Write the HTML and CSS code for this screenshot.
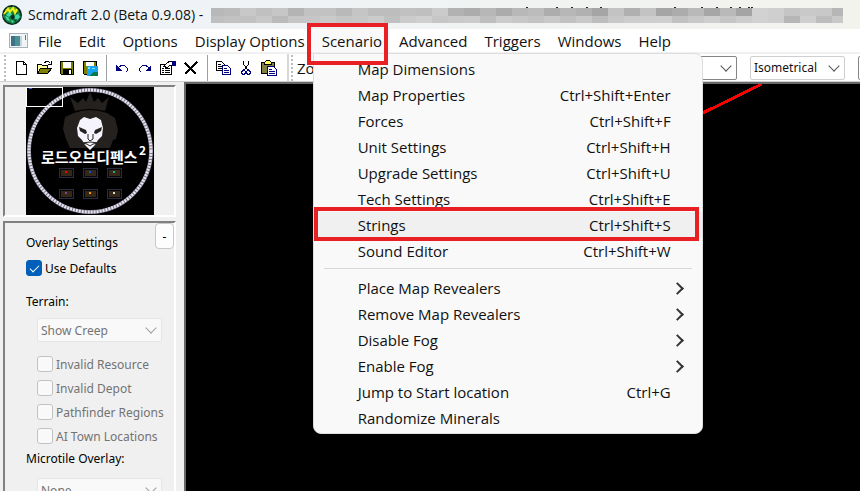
FILE: index.html
```
<!DOCTYPE html>
<html lang="en">
<head>
    <meta charset="UTF-8">
    <meta name="viewport" content="width=device-width, initial-scale=1.0">
    <title>Scmdraft 2.0 (Beta 0.9.08)</title>
    <link rel="stylesheet" href="styles.css">
</head>
<body>

<header class="titlebar">
    <svg class="app-icon" width="20" height="20" viewBox="0 0 20 20">
        <circle cx="10" cy="10" r="10" fill="#06251c"/>
        <path d="M1 9l5-6 4 4 3-5 5 6 1 4-3 4-5 3-6-2-4-5z" fill="#17843c"/>
        <path d="M3 11l3 1 2 4-3-1zM12 11l4-2 2 3-4 4zM7 7l3 2-3 3-3-2zM9 15l3 1-2 2z" fill="#3fd9b0"/>
        <path d="M8 12l3-3 2 3-2 3zM13 5l3 2-2 2zM2 7l2 1-1 3zM12 15l3-1-1 3z" fill="#08302a"/>
        <path d="M3 5l3-3h7l4 4-3 2-4-2-4 2z" fill="#5fae2c"/>
        <path d="M2 9l4-5 2 3 3-4 2 5 2-4" fill="none" stroke="#f0ef18" stroke-width="2"/>
    </svg>
    <span class="title">Scmdraft 2.0 (Beta 0.9.08) -</span>
    <svg class="mosaic" id="mosaic" width="632" height="16" viewBox="0 0 632 16" shape-rendering="crispEdges"></svg>
</header>

<nav class="menubar">
    <svg class="doc-icon" width="19" height="15" viewBox="0 0 19 15" shape-rendering="crispEdges">
        <rect width="19" height="15" fill="#a9b2bc"/>
        <rect x="1" y="1" width="17" height="13" fill="#f1f5f7"/>
        <rect x="2" y="3" width="9" height="10" fill="#4c8f94"/>
        <rect x="2" y="3" width="4" height="10" fill="#3b7284"/>
        <rect x="11" y="3" width="2" height="10" fill="#c5d6dc"/>
        <rect x="16" y="2" width="1" height="5" fill="#4a7c96"/>
    </svg>
    <button>File</button>
    <button>Edit</button>
    <button>Options</button>
    <button>Display Options</button>
    <div class="menu-holder">
        <button class="open">Scenario</button>
        <div class="menu">
            <button class="item">Map Dimensions</button>
            <button class="item">Map Properties<span>Ctrl+Shift+Enter</span></button>
            <button class="item">Forces<span>Ctrl+Shift+F</span></button>
            <button class="item">Unit Settings<span>Ctrl+Shift+H</span></button>
            <button class="item">Upgrade Settings<span>Ctrl+Shift+U</span></button>
            <button class="item">Tech Settings<span>Ctrl+Shift+E</span></button>
            <button class="item active">Strings<span>Ctrl+Shift+S</span></button>
            <button class="item">Sound Editor<span>Ctrl+Shift+W</span></button>
            <hr>
            <button class="item sub">Place Map Revealers</button>
            <button class="item sub">Remove Map Revealers</button>
            <button class="item sub">Disable Fog</button>
            <button class="item sub">Enable Fog</button>
            <button class="item">Jump to Start location<span>Ctrl+G</span></button>
            <button class="item">Randomize Minerals</button>
        </div>
    </div>
    <button>Advanced</button>
    <button>Triggers</button>
    <button>Windows</button>
    <button>Help</button>
</nav>

<div class="toolbar">
    <i class="grip"></i>
    <button class="tool" aria-label="New"><svg viewBox="0 0 16 16"><path d="M3.5 1.5h7l3 3v10h-10zM10.5 1.5v3h3" fill="#fff" stroke="#000"/></svg></button>
    <button class="tool" aria-label="Open"><svg viewBox="0 0 16 16"><path d="M1.5 13.5v-9h4l1 1h5v3" fill="#ffff9c" stroke="#000"/><path d="M1.5 13.5l3-5h11l-4 5z" fill="#808000" stroke="#000"/><path d="M8.5 2.5l2-1h2l2 2M15 1v3h-3" fill="none" stroke="#000"/></svg></button>
    <button class="tool" aria-label="Save"><svg viewBox="0 0 16 16"><path d="M1.5 1.5h13v13h-12l-1-1z" fill="#808000" stroke="#000"/><path d="M4 2h8v6H4z" fill="#fff"/><path d="M4 9h9v6H4z" fill="#000"/><path d="M10 10h2v4h-2z" fill="#fff"/></svg></button>
    <button class="tool" aria-label="Save map image"><svg viewBox="0 0 16 16"><path d="M1.5 1.5h13v13h-12l-1-1z" fill="#808000" stroke="#000"/><path d="M4 2h8v4H4z" fill="#fff"/><path d="M5 6h11v10H5z" fill="#18a4ec"/><path d="M6 7h2v2H6zM10 8h3v1h-3z" fill="#6fe3ff"/><path d="M7 16l5-4h4v4z" fill="#087a4a"/></svg></button>
    <i class="sep"></i>
    <button class="tool" aria-label="Undo"><svg viewBox="0 0 16 16"><path d="M3.5 8.5l2-2 2-1h3l3 3v2l-2 2" fill="none" stroke="#000080"/><path d="M2 5v6h6z" fill="#000080"/></svg></button>
    <button class="tool" aria-label="Redo"><svg viewBox="0 0 16 16"><path d="M12.5 8.5l-2-2-2-1h-3l-3 3v2l2 2" fill="none" stroke="#000080"/><path d="M14 5v6H8z" fill="#000080"/></svg></button>
    <button class="tool" aria-label="Properties"><svg viewBox="0 0 16 16"><path d="M.5 4.5h11v10H.5z" fill="#fff" stroke="#000"/><path d="M2 8.5h2M5 8.5h5M2 10.5h2M5 10.5h5M2 12.5h2M5 12.5h5" stroke="#000"/><path d="M3.5 6.5l4-4 2-1h3v4h-3l-2 2z" fill="#fff" stroke="#000"/><path d="M12 1h4v5h-4z" fill="#000080"/></svg></button>
    <button class="tool" aria-label="Delete"><svg viewBox="0 0 16 16"><path d="M2 3l11 11M14 2L2 14" stroke="#000" stroke-width="2"/></svg></button>
    <i class="sep"></i>
    <button class="tool" aria-label="Copy"><svg viewBox="0 0 16 16"><path d="M1.5 1.5h5l3 3v6h-8z" fill="#fff" stroke="#000"/><path d="M3 4.5h3M3 6.5h5M3 8.5h5" stroke="#000"/><path d="M7.5 5.5h5l3 3v6h-8z" fill="#fff" stroke="#000080"/><path d="M9 8.5h3M9 10.5h5M9 12.5h5" stroke="#000080"/></svg></button>
    <button class="tool" aria-label="Cut"><svg viewBox="0 0 16 16"><path d="M5.5 1v3l4 6M10.5 1v3l-4 6" fill="none" stroke="#000"/><path d="M6.5 9.5l-2 1-1 2 1 2h2l1-2zM9.5 9.5l2 1 1 2-1 2h-2l-1-2z" fill="none" stroke="#000080"/></svg></button>
    <button class="tool" aria-label="Paste"><svg viewBox="0 0 16 16"><path d="M.5 2.5h13v11H.5z" fill="#808040" stroke="#000"/><path d="M3.5 3.5v-1l2-2h3l2 2v2h-7z" fill="#ffff60" stroke="#000"/><path d="M6.5 6.5h6l3 3v6h-9z" fill="#fff" stroke="#000080"/><path d="M8 9.5h3M8 11.5h6M8 13.5h6" stroke="#000080"/></svg></button>
    <i class="edge"></i>
    <i class="grip"></i>
    <label class="zoom-label" for="zoom">Zoom:</label>
    <span class="combo strong"><select id="zoom"><option></option></select></span>
    <span class="combo view"><select aria-label="View"><option>Isometrical</option></select></span>
    <span class="combo strong"><select aria-label="Layer"><option></option></select></span>
</div>

<main>
    <aside>
        <section class="panel map-panel">
            <svg class="minimap" width="128" height="128" viewBox="0 0 128 128">
                <rect width="128" height="128"/>
                <circle cx="64" cy="64" r="61" fill="none" stroke="#777487" stroke-width="4"/>
                <circle cx="64" cy="64" r="61" fill="none" stroke="#e8e3ee" stroke-width="3" stroke-dasharray="2 1"/>
                <path d="M49 24l-5-14 8 6 5-5 3 4 4-10 4 10 4-4 4 5 7-6-4 14q-15-4-30 0z" fill="#24211e"/>
                <path d="M48 26q16-6 33 0l8 5 3 12-2 9-3 1-3 8H44l-4-9-3-10 2-12z" fill="#24211e"/>
                <path d="M54 33l4-3 6 2 6-2 5 3 2 8-1 8-4 4-3 5-5 5-5-5-3-5-4-4-1-8z" fill="#f5f3fb"/>
                <path d="M53 40l7 3 1 3-2 1-5-3zM76 40l-7 3-1 3 2 1 5-3z" fill="#24211e"/>
                <path d="M62 47v5l2 2 3-2v-5M56 56l8-1 9 1-6 1-3 2-3-2z" fill="none" stroke="#24211e"/>
                <text class="map-name" x="15" y="76">로드오브디펜스</text>
                <text class="map-power" x="113" y="68">2</text>
                <g id="beacons" shape-rendering="crispEdges"></g>
                <rect x=".5" y=".5" width="36" height="19" fill="none" stroke="#fff"/>
                <path d="M3 1h3v1H3z" fill="#405ee0"/>
            </svg>
        </section>
        <section class="panel settings">
            <button class="collapse">-</button>
            <h2>Overlay Settings</h2>
            <label class="check"><input type="checkbox" checked>Use Defaults</label>
            <h2 class="terrain">Terrain:</h2>
            <span class="combo disabled"><select aria-label="Terrain" disabled><option>Show Creep</option></select></span>
            <div class="checks">
                <label class="check"><input type="checkbox" disabled>Invalid Resource</label>
                <label class="check"><input type="checkbox" disabled>Invalid Depot</label>
                <label class="check"><input type="checkbox" disabled>Pathfinder Regions</label>
                <label class="check"><input type="checkbox" disabled>AI Town Locations</label>
            </div>
            <h2 class="microtile">Microtile Overlay:</h2>
            <span class="combo disabled"><select aria-label="Microtile Overlay" disabled><option>None</option></select></span>
        </section>
    </aside>
    <div class="canvas">
        <svg width="100%" height="100" shape-rendering="crispEdges">
            <path d="M400 86L576 0" stroke="#f00" stroke-width="3"/>
        </svg>
    </div>
</main>

<script src="app.js"></script>
</body>
</html>
```

FILE: styles.css
```
* {
    box-sizing: border-box;
}
body {
    margin: 0;
    height: 100vh;
    display: flex;
    flex-direction: column;
    overflow: hidden;
    background-color: #f0f0f0;
    color: #111;
    font-family: "Open Sans", sans-serif;
    font-size: 15px;
}
button, select, input {
    margin: 0;
    padding: 0;
    border: 0;
    background: none;
    color: inherit;
    font: inherit;
}

/* title and menu bar */
.titlebar {
    flex: none;
    display: flex;
    align-items: center;
    height: 29px;
    padding-left: 2px;
    background: linear-gradient(90deg, #eef3f9, #f3f3ee);
}
.title {
    width: 183px;
    margin-left: 6px;
    font-size: 14px;
    white-space: nowrap;
}
.mosaic {
    margin-top: 2px;
    overflow: visible;
}
.menubar {
    flex: none;
    display: flex;
    align-items: center;
    height: 25px;
    padding-left: 9px;
    background-color: #fff;
    border-bottom: 2px solid #f0f0f0;
}
.doc-icon {
    margin-right: 1px;
}
.menubar > button, .open {
    height: 23px;
    padding: 0 8px 0 9px;
    white-space: nowrap;
}
.menu-holder {
    position: relative;
    background-color: #f9f9f9;
}
.menu-holder::before {
    content: "";
    position: absolute;
    z-index: 3;
    top: -6px;
    left: -6px;
    right: 2px;
    height: 34px;
    border: 4px solid #e81f23;
}
.menu {
    position: absolute;
    z-index: 2;
    top: 24px;
    left: 0;
    width: 390px;
    padding: 2px 0;
    background-color: #f9f9f9;
    border: 1px solid #dedede;
    border-radius: 0 8px 8px 8px;
}
.item {
    position: relative;
    display: flex;
    justify-content: space-between;
    align-items: center;
    width: 100%;
    height: 26px;
    padding: 0 31px 0 44px;
}
.item.active {
    background-color: #f0f0f0;
}
.item.active::before {
    content: "";
    position: absolute;
    top: -5px;
    bottom: -3px;
    left: 0;
    right: 3px;
    border: 4px solid #e81f23;
}
.item.sub::after, .combo::after {
    content: "";
    width: 7px;
    height: 7px;
    border: solid #333;
    border-width: 2px 2px 0 0;
    transform: rotate(45deg);
}
.item.sub {
    padding-right: 20px;
}
.menu hr {
    margin: 4px 10px 6px;
    border: 0;
    border-top: 1px solid #d7d7d7;
}

/* toolbar */
.toolbar {
    flex: none;
    display: flex;
    align-items: center;
    height: 28px;
    padding-left: 4px;
    overflow: hidden;
    background-color: #fff;
    border-bottom: 1px solid #d0d0d0;
}
.toolbar > * {
    flex: none;
}
.grip {
    width: 2px;
    height: 26px;
    margin-right: 4px;
    background: repeating-linear-gradient(#bcbcbc 0 2px, #fff 2px 4px);
}
.tool {
    width: 23px;
    height: 22px;
    padding: 3px 4px 3px 3px;
}
.tool svg {
    display: block;
    width: 16px;
    height: 16px;
    shape-rendering: crispEdges;
}
.sep {
    width: 1px;
    height: 26px;
    margin: 0 4px;
    background-color: #a0a0a0;
}
.edge {
    width: 2px;
    height: 28px;
    margin: 0 2px 0 6px;
    background-color: #d8d8d8;
}
.zoom-label {
    width: 320px;
}
.combo {
    position: relative;
    display: block;
    width: 120px;
    height: 24px;
    margin-right: 13px;
    background-color: #fff;
    border: 1px solid #cfcfcf;
    border-radius: 2px;
    font-family: "Noto Sans", sans-serif;
    font-size: 12px;
}
.combo select {
    display: block;
    width: 100%;
    height: 100%;
    padding-left: 3px;
    appearance: none;
    opacity: 1;
}
.combo::after {
    position: absolute;
    top: 5px;
    right: 6px;
    border-color: #555;
    border-width: 1px 1px 0 0;
    transform: rotate(135deg);
    pointer-events: none;
}
.combo.strong {
    border-color: #858585;
}
.combo.view {
    width: 95px;
}
.combo.disabled {
    width: 125px;
    margin: 0 0 0 11px;
    background-color: #f9f9f9;
    border-color: #e6e6e6;
    color: #737373;
}
.combo.disabled::after {
    border-color: #a0a0a0;
}

/* side panels */
main {
    flex: 1;
    min-height: 0;
    display: flex;
}
aside {
    flex: none;
    display: flex;
    flex-direction: column;
    width: 184px;
    padding: 3px 8px 0 3px;
}
.panel {
    border: 2px solid;
    border-color: #808080 #fff #fff #808080;
}
.map-panel {
    flex: none;
    margin-bottom: 4px;
}
.minimap {
    display: block;
    margin: 0 auto;
}
.map-name, .map-power {
    fill: #fff;
    font-family: "Noto Sans CJK KR", sans-serif;
    font-size: 15px;
    font-weight: bold;
}
.map-power {
    font-size: 12px;
}
.settings {
    position: relative;
    flex: 1;
    min-height: 0;
    overflow: hidden;
    padding: 11px 0 0 21px;
    border-bottom: 0;
    font-family: "Noto Sans", sans-serif;
    font-size: 12px;
    color: #000;
}
.settings h2 {
    margin: 0;
    font-size: 12px;
    font-weight: normal;
    line-height: 18px;
}
.collapse {
    position: absolute;
    top: 0;
    right: 0;
    width: 19px;
    height: 26px;
    background-color: #fdfdfd;
    border: 1px solid #c8c8c8;
    border-radius: 4px;
}
.check {
    display: flex;
    align-items: center;
    height: 24px;
    white-space: nowrap;
}
h2 + .check {
    margin-top: 4px;
}
.check input {
    flex: none;
    width: 16px;
    height: 16px;
    margin-right: 3px;
    appearance: none;
    background-color: #f9f9f9;
    border: 1px solid #c3c3c3;
    border-radius: 3px;
}
.check input:checked {
    background-color: #005fb8;
    border-color: #005fb8;
}
.check input:checked::before {
    content: "";
    display: block;
    width: 8px;
    height: 4px;
    margin: 4px 3px;
    border: solid #fff;
    border-width: 0 0 1px 1px;
    transform: rotate(-45deg);
}
.settings .terrain {
    margin: 13px 0 7px;
}
.checks {
    padding: 10px 0 2px 11px;
    color: #737373;
}
.settings .microtile {
    margin-bottom: 10px;
}
.canvas {
    position: relative;
    flex: 1;
    overflow: hidden;
    background-color: #000;
    border: 2px solid #696969;
    border-width: 2px 0 0 2px;
}
.canvas svg {
    position: absolute;
    top: 0;
    left: 0;
}
```

FILE: app.js
```
// grey cells that cover the file path, two rows
const rows = [
    'b8 bb c8 c0 c6 b4 c2 c2 b9 c5 bd bd c1 bf cb b2 ac b7 ab b8 bc ad b7 b1 a5 c3 b0 c3 a5 ac b9 a6 b9 a4 d2 cf c5 c9 c8 b6',
    'bf c2 c1 c8 ba c5 c6 ca c5 c7 cb c0 cb d0 c6 ca cb be cb c7 c3 c9 c1 c9 bd c8 cc ce cf c1 c8 ce c5 cc d1 cf b6 cf bd c9'
];
const svg = (x, y, w, h, fill, stroke) =>
    `<rect x="${x}" y="${y}" width="${w}" height="${h}" fill="${fill}" stroke="${stroke || 'none'}"/>`;

let cells = '';
rows.forEach((row, r) => row.split(' ').forEach((c, i) => {
    const x = Math.max(0, i * 16 - 3);
    cells += svg(x, r * 8, Math.min(16, 632 - x), r ? 7 : 8, '#' + c + c + c);
}));
// tips of the letters left above the cells
[315, 345, 360, 375, 389, 463, 490, 505, 519, 528, 537, 540].forEach(x => {
    cells += svg(x, -1, 2, 1, '#222');
});
document.getElementById('mosaic').innerHTML = cells;

const colors = ['#f00000', '#1050d0', '#20a888', '#8040a0', '#ff9010', '#c8e0d0'];
document.getElementById('beacons').innerHTML = colors.map((c, i) => {
    const x = 33 + i % 3 * 24;
    const y = i < 3 ? 81 : 102;
    return svg(x + .5, y + .5, 14, 9, '#08080c', '#2a2c40') + svg(x + 2, y + 2, 11, 6, '#352817') + svg(x + 6, y + 3, 2, 2, c);
}).join('');
```
